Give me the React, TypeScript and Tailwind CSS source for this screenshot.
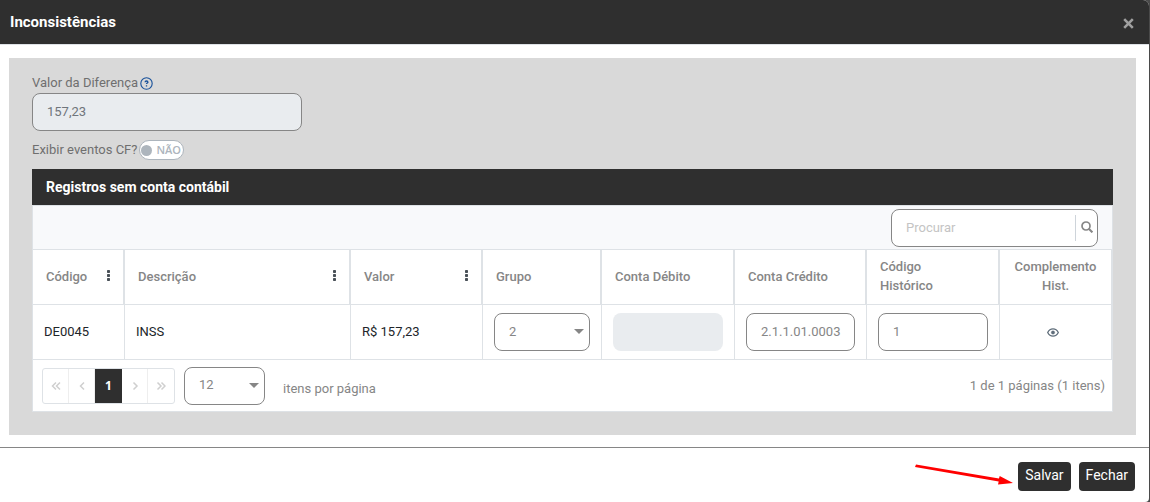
import { useState } from 'react';

const columns = [
  { label: 'Código', menu: true, width: 'w-[91px]' },
  { label: 'Descrição', menu: true, width: '' },
  { label: 'Valor', menu: true, width: 'w-[132px]' },
  { label: 'Grupo', menu: false, width: 'w-[119px]' },
  { label: 'Conta Débito', menu: false, width: 'w-[133px]' },
  { label: 'Conta Crédito', menu: false, width: 'w-[132px]' },
  { label: 'Código Histórico', menu: false, width: 'w-[133px]' },
  { label: 'Complemento Hist.', menu: false, width: 'w-[113px]', center: true },
];

const pagerIcons = {
  first: 'M5 1.5 1.5 5 5 8.5M9 1.5 5.5 5 9 8.5',
  prev: 'M7 1.5 3.5 5 7 8.5',
  next: 'M3.5 1.5 7 5 3.5 8.5',
  last: 'M1.5 1.5 5 5 1.5 8.5M5.5 1.5 9 5 5.5 8.5',
};

function PagerButton({ label, icon }: { label: string; icon: string }) {
  return (
    <button
      aria-label={label}
      disabled
      className="flex w-[26px] items-center justify-center border-r border-[#eeeeee] text-[#cfcfcf] last:border-r-0"
    >
      <svg viewBox="0 0 10 10" className="size-[10px]" fill="none" stroke="currentColor" strokeWidth="1.5">
        <path d={icon} />
      </svg>
    </button>
  );
}

function Dropdown({ label, options, className }: { label: string; options: string[]; className: string }) {
  return (
    <div className={`relative ${className}`}>
      <select
        aria-label={label}
        className="block h-[38px] w-full appearance-none rounded-lg border border-[#868686] bg-white pr-5 pb-px pl-[14px] text-[13px] text-[#868686]"
      >
        {options.map((o) => (
          <option key={o}>{o}</option>
        ))}
      </select>
      <svg
        viewBox="0 0 10 5"
        className="pointer-events-none absolute top-4 right-[6px] h-[5px] w-[10px]"
        fill="#868686"
      >
        <path d="M0 0h10L5 5z" />
      </svg>
    </div>
  );
}

export default function App() {
  const [search, setSearch] = useState('');
  const [showCf, setShowCf] = useState(false);
  const [credit, setCredit] = useState('2.1.1.01.0003');
  const [history, setHistory] = useState('1');

  return (
    <div className="min-h-screen bg-[#4a4a4a] pr-px font-['Roboto',sans-serif] text-[13px] text-[#6f6f6f]">
      <div role="dialog" aria-labelledby="dialog-title" className="relative min-h-screen rounded-tr-md rounded-br-sm bg-white">
        <header className="flex h-[45px] items-center justify-between rounded-tr-md border-b border-[#dee2e6] bg-[#2f2f2f] pr-[15px] pl-[10px]">
          <h1 id="dialog-title" className="text-[15px] font-bold text-white">
            Inconsistências
          </h1>
          <button aria-label="Fechar janela" className="pt-[3px] text-[#a0a0a0]">
            <svg viewBox="0 0 11 11" className="size-[11px]" stroke="currentColor" strokeWidth="2.6">
              <path d="M1.2 1.2 9.8 9.8M9.8 1.2 1.2 9.8" />
            </svg>
          </button>
        </header>

        <main className="pt-[13px] pr-[13px] pb-3 pl-[9px]">
          <div className="bg-[#d9d9d9] px-[23px] pt-[14px] pb-[23px]">
            <div className="flex h-[21px] items-center gap-[2px]">
              <label htmlFor="difference">Valor da Diferença</label>
              <svg viewBox="0 0 13 13" className="mt-[2px] size-[13px]" fill="none" stroke="#17509a">
                <circle cx="6.5" cy="6.5" r="5.7" strokeWidth="1.1" />
                <path d="M5.100 5.200C5.100 4.400 5.700 4 6.500 4s1.400.5 1.400 1.200c0 .8-1.400.9-1.400 1.900M6.500 8.200v1.200" strokeWidth="1.3" />
              </svg>
            </div>
            <input
              id="difference"
              defaultValue="157,23"
              disabled
              className="block h-[38px] w-[270px] rounded-lg border border-[#868686] bg-[#e9ecef] px-[14px] pb-px text-[13px] text-[#6f757b]"
            />

            <div className="mt-2 flex h-[22px] items-center gap-[2px]">
              <span>Exibir eventos CF?</span>
              <label className="flex h-[20px] w-[45px] items-center gap-1 rounded-full border border-[#adb5bd] bg-white pl-px font-['Open_Sans',sans-serif] text-[11px] font-semibold text-[#adb5bd]">
                <input
                  type="checkbox"
                  aria-label="Exibir eventos CF?"
                  checked={showCf}
                  onChange={(e) => setShowCf(e.target.checked)}
                  className="size-[11px] appearance-none rounded-full bg-[#adb5bd]"
                />
                <span>{showCf ? 'SIM' : 'NÃO'}</span>
              </label>
            </div>

            <section className="mt-2">
              <h2 className="h-9 bg-[#2f2f2f] pl-[14px] text-[14px] leading-9 font-bold text-white">
                Registros sem conta contábil
              </h2>
              <div className="border border-[#dee2e6] bg-white">
                <div className="flex h-[43px] justify-end bg-[#f8f9fb] pt-[3px] pr-[14px]">
                  <div className="flex h-[38px] w-[207px] items-center rounded-lg border border-[#868686] bg-white">
                    <input
                      aria-label="Procurar"
                      placeholder="Procurar"
                      value={search}
                      onChange={(e) => setSearch(e.target.value)}
                      className="min-w-0 flex-1 pl-[14px] text-[13px] outline-none placeholder:text-[#c4c4c4]"
                    />
                    <button
                      aria-label="Buscar"
                      className="flex h-[26px] w-[22px] items-center justify-center border-l border-[#ced4da] pb-[2px]"
                    >
                      <svg viewBox="0 0 12 12" className="size-3" fill="none" stroke="#868686">
                        <circle cx="5" cy="5" r="4" strokeWidth="1.7" />
                        <path d="m7.8 7.8 3.6 3.6" strokeWidth="2" />
                      </svg>
                    </button>
                  </div>
                </div>

                <table className="w-full table-fixed border-separate border-spacing-0">
                  <thead>
                    <tr>
                      {columns.map((col) => (
                        <th
                          key={col.label}
                          className={`h-14 border-y border-r border-l border-[#dee2e6] pr-[13px] pb-[2px] pl-[13px] font-medium text-[#868686] first:border-l-0 ${col.width} ${col.center ? 'text-center' : 'text-left'}`}
                        >
                          <div className="flex items-center justify-between leading-[19px]">
                            <span className={col.center ? 'w-full' : 'max-w-20'}>{col.label}</span>
                            {col.menu && (
                              <button aria-label={`Menu ${col.label}`}>
                                <svg viewBox="0 0 3 11" className="mb-[2px] h-[11px] w-[3px]" fill="#495057">
                                  <rect width="3" height="3" rx=".7" />
                                  <rect y="4" width="3" height="3" rx=".7" />
                                  <rect y="8" width="3" height="3" rx=".7" />
                                </svg>
                              </button>
                            )}
                          </div>
                        </th>
                      ))}
                    </tr>
                  </thead>
                  <tbody className="text-[#212529] [&_td]:h-[55px] [&_td]:border-b [&_td]:border-l [&_td]:border-[#dee2e6] [&_td]:px-[11px]">
                    <tr>
                      <td className="border-l-0!">DE0045</td>
                      <td>INSS</td>
                      <td>R$ 157,23</td>
                      <td>
                        <Dropdown label="Grupo" options={['2', '1', '3']} className="w-full" />
                      </td>
                      <td>
                        <input
                          aria-label="Conta Débito"
                          disabled
                          className="block h-[38px] w-full rounded-lg bg-[#e9ecef]"
                        />
                      </td>
                      <td>
                        <input
                          aria-label="Conta Crédito"
                          value={credit}
                          onChange={(e) => setCredit(e.target.value)}
                          className="block h-[38px] w-full rounded-lg border border-[#868686] pb-px pl-[14px] text-[13px] text-[#868686]"
                        />
                      </td>
                      <td>
                        <input
                          aria-label="Código Histórico"
                          value={history}
                          onChange={(e) => setHistory(e.target.value)}
                          className="block h-[38px] w-full rounded-lg border border-[#868686] pb-px pl-[14px] text-[13px] text-[#868686]"
                        />
                      </td>
                      <td className="border-r pr-4! text-center">
                        <button aria-label="Ver complemento" className="align-middle">
                          <svg viewBox="0 0 12 9" className="h-[9px] w-3" fill="none" stroke="#5f6d7a">
                            <path d="M.7 4.5C1.8 2.2 3.7.8 6 .8s4.2 1.4 5.3 3.7C10.2 6.8 8.3 8.2 6 8.2S1.8 6.8.7 4.5z" strokeWidth="1.3" />
                            <circle cx="6" cy="4.5" r="1.7" fill="#5f6d7a" strokeWidth=".4" />
                          </svg>
                        </button>
                      </td>
                    </tr>
                  </tbody>
                </table>

                <footer className="flex h-[51px] items-center pr-[7px] pl-[9px] text-[#868686]">
                  <nav aria-label="Paginação" className="flex h-9 rounded-[3px] border border-[#dee2e6]">
                    <PagerButton label="Primeira página" icon={pagerIcons.first} />
                    <PagerButton label="Página anterior" icon={pagerIcons.prev} />
                    <button
                      aria-current="page"
                      className="w-[27px] bg-[#2f2f2f] font-['Open_Sans',sans-serif] text-xs font-bold text-white"
                    >
                      1
                    </button>
                    <PagerButton label="Próxima página" icon={pagerIcons.next} />
                    <PagerButton label="Última página" icon={pagerIcons.last} />
                  </nav>
                  <Dropdown label="Itens por página" options={['12', '24', '48']} className="ml-[9px] w-[81px]" />
                  <span className="mt-[6px] ml-[18px]">itens por página</span>
                  <span className="ml-auto">1 de 1 páginas (1 itens)</span>
                </footer>
              </div>
            </section>
          </div>
        </main>

        <div className="relative flex justify-end gap-2 border-t border-[#868686] pt-[14px] pr-[14px] pb-[11px] text-[14px] text-white">
          <button className="h-[29px] rounded bg-[#2f2f2f] px-[7px] pb-[2px]">Salvar</button>
          <button className="h-[29px] rounded bg-[#2f2f2f] px-[7px] pb-[2px]">Fechar</button>
          <svg
            viewBox="0 0 98 22"
            className="pointer-events-none absolute top-4 right-[136px] h-[22px] w-[98px]"
            fill="#ff0000"
          >
            <path d="M1 .5 84 14.5 84.7 12 98 19 83 20.5 83.7 17.5 0 3z" />
          </svg>
        </div>
      </div>
    </div>
  );
}
